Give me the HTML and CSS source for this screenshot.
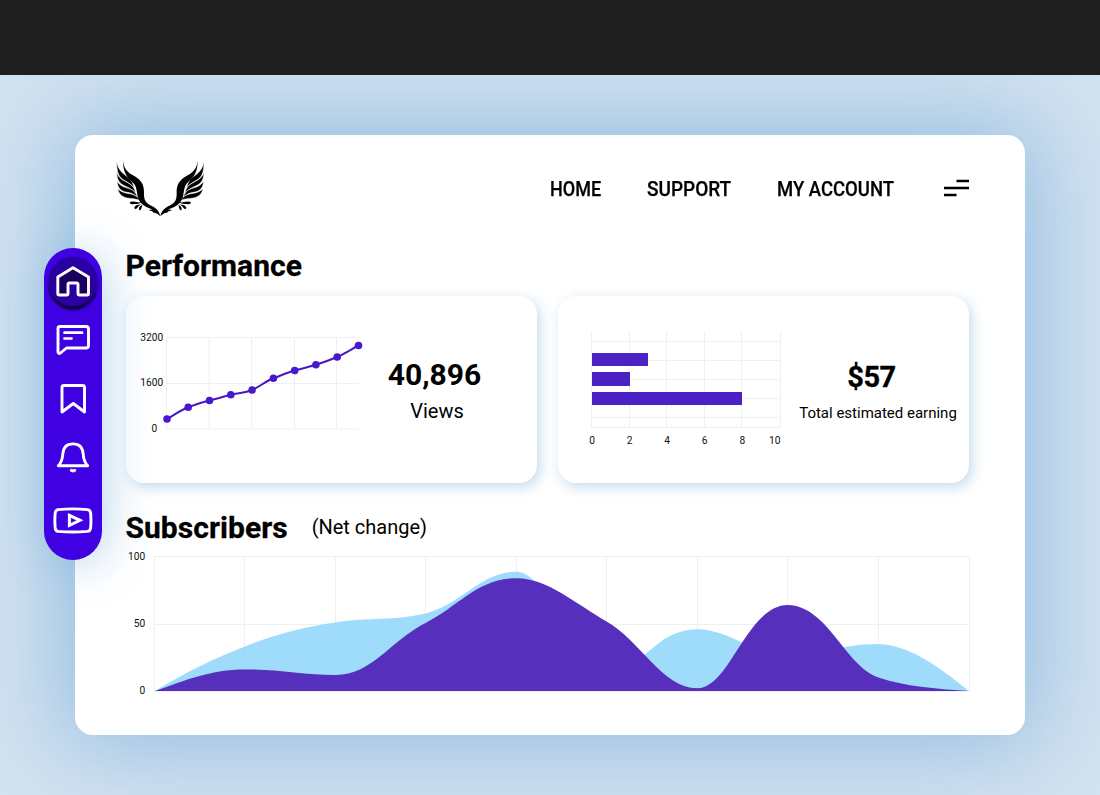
FILE: index.html
```html
<!DOCTYPE html>
<html lang="en">
<head>
<meta charset="utf-8">
<title>Performance dashboard</title>
<link rel="stylesheet" href="styles.css">
</head>
<body>
<div class="topbar"></div>
<main class="stage">
  <div class="panel">
    <header class="header">
      <svg class="logo" viewBox="45 30 272 170" aria-label="Wings">
        <defs>
          <g id="wing">
            <g class="feathers">
              <path d="M50 34C54 58 65 68 78 77C92 86 99 97 102 113C92 101 83 97 73 91C56 82 50 68 50 34Z"/>
              <path d="M50 67C57 86 69 91 83 98C97 105 104 114 107 129C96 117 86 113 75 108C59 101 51 91 50 67Z"/>
              <path d="M51 94C61 109 74 112 88 116C101 120 108 128 112 141C101 131 91 128 77 126C62 123 53 114 51 94Z"/>
              <path d="M53 116C68 130 81 129 93 132C106 135 114 141 119 151C106 146 95 146 82 144C68 141 58 135 53 116Z"/>
            </g>
            <path d="M69 33C72 57 83 67 99 76C124 89 133 105 132 130C131 155 142 162 156 168C170 175 178 184 181 199C172 189 165 188 160 188C160 184 153 184 146 180C151 180 154 179 157 178C143 174 127 166 119 154C109 139 113 122 105 106C96 89 69 83 69 33Z"/>
            <path d="M89 157C94 153 104 154 110 156C116 158 121 157 125 157C119 162 110 162 101 162C94 164 90 162 89 157Z"/>
            <path d="M103 174C104 167 113 164 124 163C119 165 116 169 112 173C108 178 104 178 103 174Z"/>
            <path d="M117 178C116 171 122 166 127 165C125 169 126 174 122 179C119 182 117 181 117 178Z"/>
          </g>
        </defs>
        <use href="#wing"/>
        <use href="#wing" transform="translate(362 0) scale(-1 1)"/>
      </svg>
      <nav class="nav">
        <a class="nav-home">HOME</a>
        <a class="nav-support">SUPPORT</a>
        <a class="nav-account">MY ACCOUNT</a>
        <svg class="menu" viewBox="0 0 26 20"><path d="M12.500 3H25M0 10h25M0 17h12.500" stroke="#000" stroke-width="2.600"/></svg>
      </nav>
    </header>

    <h1 class="title">Performance</h1>
    <section class="cards">
      <article class="card">
        <svg class="line-chart" viewBox="126 296 245 187">
          <path class="grid" d="M166 337.500H359M166 383.500H359M166 429H359M166.500 337V429M209 337V429M251.500 337V429M294.500 337V429M336.500 337V429"/>
          <path class="line" d="M167 419C174 415 181 410 188.200 407.300S202 402 209.500 400.500S224 396.500 230.800 394.700S245 393 252.100 390S266 381 273.400 378.300S287 372.500 294.700 370.500S309 367 315.900 364.800S330 360 337.200 357S351 349.500 358.500 345.500"/>
          <g class="dots">
            <circle cx="167" cy="419" r="3.800"/><circle cx="188.200" cy="407.300" r="3.800"/><circle cx="209.500" cy="400.500" r="3.800"/><circle cx="230.800" cy="394.700" r="3.800"/><circle cx="252.100" cy="390" r="3.800"/><circle cx="273.400" cy="378.300" r="3.800"/><circle cx="294.700" cy="370.500" r="3.800"/><circle cx="315.900" cy="364.800" r="3.800"/><circle cx="337.200" cy="357" r="3.800"/><circle cx="358.500" cy="345.500" r="3.800"/>
          </g>
          <g class="axis"><text x="140.300" y="341">3200</text><text x="140.300" y="386.300">1600</text><text x="151.600" y="432.300">0</text></g>
        </svg>
        <div class="stat stat-views">
          <strong>40,896</strong>
          <span>Views</span>
        </div>
      </article>
      <article class="card">
        <svg class="bar-chart" viewBox="558 296 236 187">
          <path class="grid" d="M591.500 331V427.500M629.500 331V427M666.500 331V427M704.500 331V427M741.500 331V427M780.500 331V427M591 341.500H780M591 360.500H780M591 379.500H780M591 398.500H780M591 417.500H780M591 427.500H781"/>
          <path class="bars" d="M592 353h56v13h-56zM592 372h38v14h-38zM592 392h150v13h-150z"/>
          <g class="axis mid"><text x="592" y="444">0</text><text x="629.500" y="444">2</text><text x="667" y="444">4</text><text x="704.700" y="444">6</text><text x="742.300" y="444">8</text><text x="774.700" y="444">10</text></g>
        </svg>
        <div class="stat stat-earning">
          <strong>$57</strong>
          <span>Total estimated earning</span>
        </div>
      </article>
    </section>

    <div class="subhead">
      <h2 class="title">Subscribers</h2>
      <span class="note">(Net change)</span>
    </div>
    <svg class="area-chart" viewBox="126 546 848 150">
      <path class="grid" d="M154 556.500H969.500M154 624.500H969.500M154 691.500H969.500M154.500 556V691M244.500 556V691M335.500 556V691M425.500 556V691M516.500 556V691M606.500 556V691M697.500 556V691M787.500 556V691M878.500 556V691M969.500 556V691"/>
      <path class="sky" d="M155 691C186 672 215 658 245 646.500C276 634 304 627 335.500 622.500C367 617 395 621 425.500 613.500C463 604 480 572 516.500 571.700C548 572 570 660 610 676C640 671 656 629 697.500 629.300C731 630 755 656 790 657C818 656 840 644 878.500 644C910 645 939 667 969 691Z"/>
      <path class="violet" d="M155 691C186 680 211 669.500 245 669.500C276 669 304 675 335.500 675C372 675 390 641 425.500 623C459 606 478 578.300 516.500 578.300C547 578 576 604 606.500 621.500C640 640 662 688.300 697.500 688.300C730 688 747 605 788 605C828 606 845 666 878.500 677.500C906 687 940 689 969 691Z"/>
      <g class="axis end"><text x="145.200" y="560">100</text><text x="145.200" y="627.300">50</text><text x="145.200" y="694.300">0</text></g>
    </svg>
  </div>

  <aside class="sidebar">
    <svg viewBox="44 248 58 312">
      <defs><filter id="soft" x="-30%" y="-30%" width="160%" height="160%"><feGaussianBlur stdDeviation="1.300"/></filter></defs>
      <circle cx="73" cy="285.500" r="24.500" fill="#100040" filter="url(#soft)"/>
      <circle cx="73" cy="281.500" r="24.800" fill="#2b00a3"/>
      <g class="icons">
        <path fill="#1b0060" d="M73 267.800L57.800 277V293.500Q57.800 295 59.300 295H66.500Q68 295 68 293.500V284.500Q68 283 69.500 283H76.500Q78 283 78 284.500V293.500Q78 295 79.500 295H87Q88.500 295 88.500 293.500V277Z"/>
        <path d="M60 326.500H86Q88.500 326.500 88.500 329V345.500Q88.500 348 86 348H66.500L60.500 353Q58 354.500 58 351.500V328.500Q58 326.500 60 326.500Z"/>
        <path class="round" d="M64.500 332.700H82M64.500 338.500H71.500"/>
        <path d="M62 387.500Q62 385.500 64 385.500H82.500Q84.500 385.500 84.500 387.500V412L73.300 403.500L62 412Z"/>
        <path d="M58.300 465.800C62 462 62.500 459 62.800 454C63.300 447.500 67 443.900 73 443.900S82.700 447.500 83.200 454C83.500 459 84 462 87.700 465.800Z"/>
        <path class="pip" fill="#fff" d="M70.300 469.600q1.400-.6 2.700.3q1.300-.9 2.700-.3q.8 2.200-2.700 2.400q-3.500-.2-2.700-2.400z"/>
        <path d="M58 509.600Q73 508.100 87.500 509.600Q90.300 510 90.600 513Q91.300 520.500 90.600 528Q90.300 531 87.500 531.400Q73 532.500 58 531.400Q55.600 531 55.200 528Q54.500 520.500 55.200 513Q55.600 510 58 509.600Z"/>
        <path class="play" d="M69.400 515.300V525.300L80 520.300Z"/>
      </g>
    </svg>
  </aside>
</main>
</body>
</html>
```

FILE: styles.css
```css
* { box-sizing: border-box; }
body { margin: 0; width: 1100px; height: 795px; overflow: hidden; font-family: Roboto, "Liberation Sans", sans-serif; color: #000; }
.topbar { height: 75px; background: #1e1e1e; }
.stage { position: relative; height: 720px; padding: 60px 75px; background: #d2e2f0; overflow: hidden; }
.panel { height: 600px; padding: 0 51px; border-radius: 18px; background: #fff; box-shadow: 0 0 90px 10px rgba(103, 164, 215, .6); }
.header { display: flex; justify-content: space-between; height: 107px; margin: 0 4px 0 -11px; padding-top: 25px; }
.logo { width: 90.670px; height: 56.670px; }
.feathers { stroke: #fff; stroke-width: 1.600; }
.nav { display: flex; height: 57px; align-items: center; font-size: 20px; font-weight: 500; }
.nav a { white-space: nowrap; transform-origin: left center; -webkit-text-stroke: .25px #000; }
.nav-home { width: 97px; transform: scaleX(.9); }
.nav-support { width: 130px; transform: scaleX(.95); }
.nav-account { width: 167px; transform: scaleX(.925); }
.menu { width: 26px; height: 20px; margin-top: -2px; }
.title { margin: 0 0 0 -.5px; font-size: 30px; line-height: 48px; font-weight: 700; letter-spacing: .05px; white-space: nowrap; -webkit-text-stroke: .3px #000; }
.cards { display: grid; grid-template-columns: 411px 411px; gap: 21px; margin-top: 6px; }
.card { display: flex; height: 187px; border-radius: 18px; box-shadow: 3px 4px 13px rgba(103, 164, 215, .4); }
.line-chart { width: 245px; height: 187px; }
.bar-chart { width: 236px; height: 187px; }
.area-chart { display: block; width: 848px; height: 150px; margin-top: -7px; }
.stat { display: flex; flex-direction: column; align-items: center; white-space: nowrap; }
.stat strong { font-size: 30px; line-height: 36px; }
.stat-views { width: 127px; padding-top: 61px; }
.stat-views span { margin: 6px 0 0 5px; font-size: 20px; line-height: 24px; }
.stat-earning { width: 169px; padding-top: 63px; }
.stat-earning strong { margin-right: 14px; font-size: 29px; letter-spacing: -.5px; -webkit-text-stroke: .3px #000; }
.stat-earning span { margin: 8px 1px 0 0; font-size: 15px; line-height: 20px; }
.subhead { display: flex; gap: 24px; margin-top: 21px; height: 49px; }
.note { font-size: 20px; line-height: 46px; }
.grid { fill: none; stroke: #efefef; }
.line { fill: none; stroke: #4a18cb; stroke-width: 2; }
.dots { fill: #4a18cb; }
.bars { fill: #4c22c4; }
.sky { fill: #87d3fb; fill-opacity: .8; }
.violet { fill: #5630bd; }
.axis { font-size: 10.200px; fill: #111; }
.mid { text-anchor: middle; }
.end { text-anchor: end; }
/* The tool rail straddles the left edge of the panel. */
.sidebar { position: absolute; left: 44px; top: 173px; width: 58px; height: 312px; border-radius: 29px; background: #3f00e2; box-shadow: 4px 4px 45px rgba(103, 164, 215, .45); }
.sidebar svg { display: block; width: 58px; height: 312px; }
.icons path { stroke: #fff; stroke-width: 2.900; stroke-linejoin: round; }
.icons path:not([fill]) { fill: none; }
.icons .round { stroke-linecap: round; stroke-width: 2.700; }
.icons .pip { stroke-width: .8; }
.icons .play { stroke-width: 3; stroke-linejoin: miter; }
```
